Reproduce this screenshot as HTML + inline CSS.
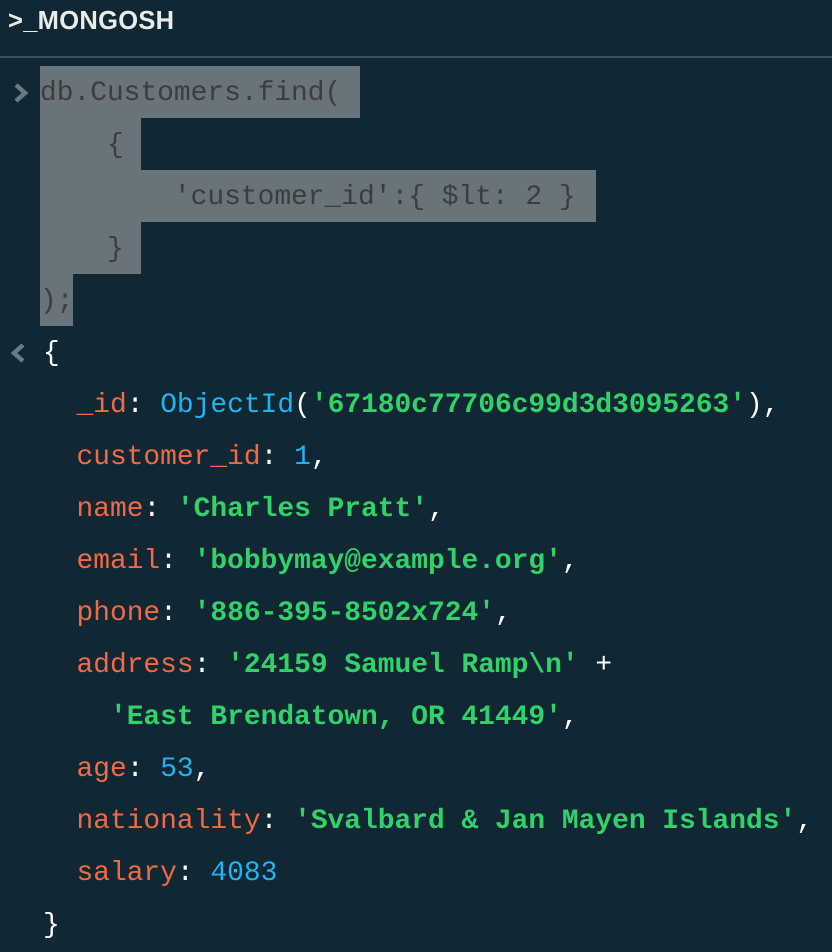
<!DOCTYPE html>
<html><head><meta charset="utf-8"><style>
html,body{margin:0;padding:0;background:#112733;width:832px;height:940px;overflow:hidden}
.hdr{position:absolute;left:0;top:0;width:832px;height:56px;border-bottom:2px solid #3d4f58;}
.hdr span{position:absolute;left:8px;top:7px;font:bold 25.5px "Liberation Sans",sans-serif;color:#e8edeb;letter-spacing:0.3px}
.l{position:absolute;font-family:"Liberation Mono",monospace;font-size:27.9px;line-height:52px;height:52px;white-space:pre;color:#fff;margin-top:2px}
.hl{position:absolute;background:#68737a}
.in{color:#3d3d3d}
.k{color:#f26a43}.s{color:#2fd36a;font-weight:bold}.n{color:#1eb5f5}
.ic{position:absolute}
</style></head><body>
<div class="hdr"><span>&gt;_MONGOSH</span></div>
<div class="hl" style="left:40px;top:66px;width:320px;height:52px"></div>
<div class="hl" style="left:40px;top:118px;width:101px;height:52px"></div>
<div class="hl" style="left:40px;top:170px;width:556px;height:52px"></div>
<div class="hl" style="left:40px;top:222px;width:101px;height:52px"></div>
<div class="hl" style="left:40px;top:274px;width:33px;height:52px"></div>
<svg class="ic" style="left:12px;top:82px" width="18" height="22"><path d="M4 3 L13 11 L4 19" stroke="#6b7a80" stroke-width="4.5" fill="none"/></svg>
<svg class="ic" style="left:9px;top:342px" width="18" height="22"><path d="M14 3 L5 11 L14 19" stroke="#6b7a80" stroke-width="4.5" fill="none"/></svg>
<div class="l in" style="left:40px;top:66px">db.Customers.find(</div>
<div class="l in" style="left:40px;top:118px">    {</div>
<div class="l in" style="left:40px;top:170px">        'customer_id':{ $lt: 2 }</div>
<div class="l in" style="left:40px;top:222px">    }</div>
<div class="l in" style="left:40px;top:274px">);</div>
<div class="l" style="left:43px;top:326px">{</div>
<div class="l" style="left:43px;top:378px">  <span class="k">_id</span>: <span class="n">ObjectId</span>(<span class="s">'67180c77706c99d3d3095263'</span>),</div>
<div class="l" style="left:43px;top:430px">  <span class="k">customer_id</span>: <span class="n">1</span>,</div>
<div class="l" style="left:43px;top:482px">  <span class="k">name</span>: <span class="s">'Charles Pratt'</span>,</div>
<div class="l" style="left:43px;top:534px">  <span class="k">email</span>: <span class="s">'bobbymay@example.org'</span>,</div>
<div class="l" style="left:43px;top:586px">  <span class="k">phone</span>: <span class="s">'886-395-8502x724'</span>,</div>
<div class="l" style="left:43px;top:638px">  <span class="k">address</span>: <span class="s">'24159 Samuel Ramp\n'</span> +</div>
<div class="l" style="left:43px;top:690px">    <span class="s">'East Brendatown, OR 41449'</span>,</div>
<div class="l" style="left:43px;top:742px">  <span class="k">age</span>: <span class="n">53</span>,</div>
<div class="l" style="left:43px;top:794px">  <span class="k">nationality</span>: <span class="s">'Svalbard &amp; Jan Mayen Islands'</span>,</div>
<div class="l" style="left:43px;top:846px">  <span class="k">salary</span>: <span class="n">4083</span></div>
<div class="l" style="left:43px;top:898px">}</div>
</body></html>
